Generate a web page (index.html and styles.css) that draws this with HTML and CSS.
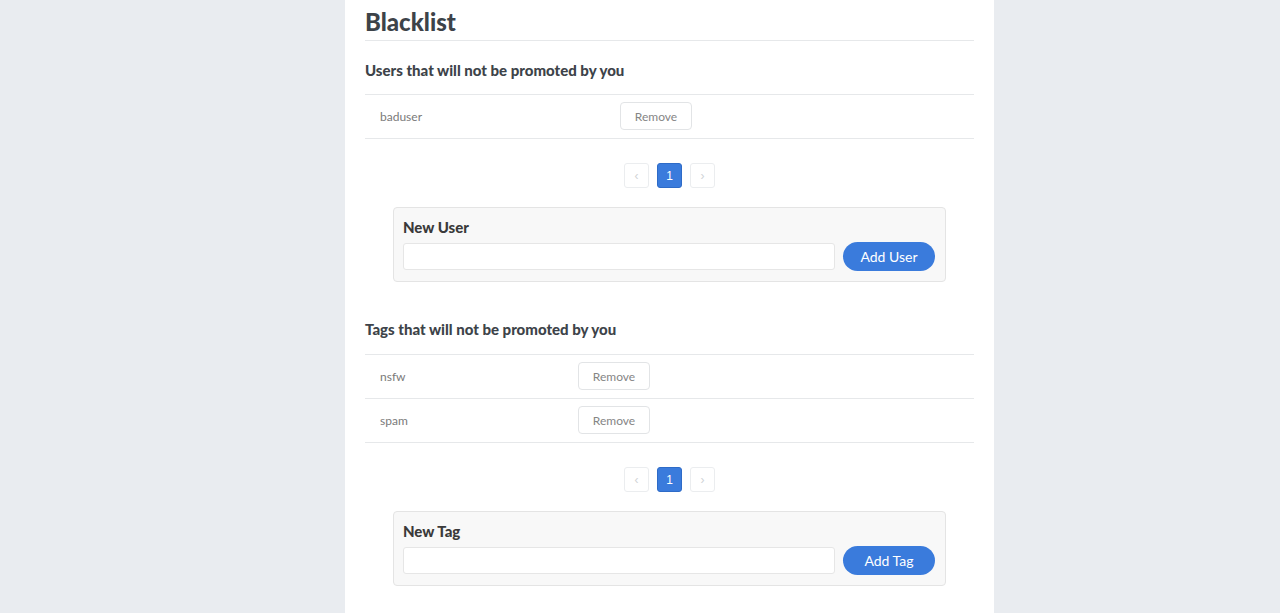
FILE: index.html
```html
<!DOCTYPE html>
<html>
<head>
<meta charset="utf-8">
<link rel="stylesheet" href="styles.css">
</head>
<body>
<div class="page">
  <main class="panel">
    <h1 class="title">Blacklist</h1>

    <h2 class="section-title first">Users that will not be promoted by you</h2>
    <table class="list list-users">
      <tr><td class="name">baduser</td><td class="action"><button class="btn-remove">Remove</button></td></tr>
    </table>
    <div class="pager">
      <span class="page-btn disabled">&#8249;</span>
      <span class="page-btn active">1</span>
      <span class="page-btn disabled">&#8250;</span>
    </div>
    <div class="add-box">
      <div class="add-label">New User</div>
      <div class="add-row">
        <input class="add-input" type="text">
        <button class="btn-add">Add User</button>
      </div>
    </div>

    <h2 class="section-title">Tags that will not be promoted by you</h2>
    <table class="list list-tags">
      <tr><td class="name">nsfw</td><td class="action"><button class="btn-remove">Remove</button></td></tr>
      <tr><td class="name">spam</td><td class="action"><button class="btn-remove">Remove</button></td></tr>
    </table>
    <div class="pager">
      <span class="page-btn disabled">&#8249;</span>
      <span class="page-btn active">1</span>
      <span class="page-btn disabled">&#8250;</span>
    </div>
    <div class="add-box">
      <div class="add-label">New Tag</div>
      <div class="add-row">
        <input class="add-input" type="text">
        <button class="btn-add">Add Tag</button>
      </div>
    </div>
  </main>
</div>
</body>
</html>
```

FILE: styles.css
```css
* { box-sizing: border-box; }
html, body {
  margin: 0;
  padding: 0;
  background: #e9ecf0;
  font-family: Lato, "Open Sans", "Liberation Sans", sans-serif;
  color: #3d4349;
}
.page {
  display: flex;
  justify-content: center;
  padding-left: 59px;
}
.panel {
  width: 649px;
  min-height: 613px;
  background: #fff;
  padding: 0 20px 20px;
}
.title {
  margin: 0;
  padding-top: 7px;
  padding-bottom: 3px;
  font-size: 24px;
  line-height: 30px;
  font-weight: 900;
  color: #3d4349;
  border-bottom: 1px solid #e6e8ea;
}
.section-title {
  margin: 37px 0 15px;
  font-size: 15px;
  line-height: 20px;
  font-weight: 900;
  color: #3d4349;
}
.section-title.first { margin-top: 19px; margin-bottom: 14px; }
.list {
  width: 100%;
  border-collapse: collapse;
}
.list td {
  border-top: 1px solid #e6e8ea;
  border-bottom: 1px solid #e6e8ea;
  height: 44px;
  padding: 0 15px 1px;
  vertical-align: middle;
  font-size: 12px;
  color: #7a7a7a;
}
.list td.action { padding-left: 0; }
.list-users td.name { width: 255px; }
.list-tags td.name { width: 213px; }
.btn-remove {
  width: 72px;
  height: 28px;
  background: #fff;
  border: 1px solid #e2e4e6;
  border-radius: 4px;
  font-family: inherit;
  font-size: 12px;
  color: #858585;
  padding: 0;
}
.pager {
  display: flex;
  justify-content: center;
  gap: 8px;
  margin-top: 24px;
}
.page-btn {
  width: 25px;
  height: 25px;
  border: 1px solid #ebedef;
  border-radius: 3px;
  display: flex;
  align-items: center;
  justify-content: center;
  font-size: 12px;
  color: #d0d3d6;
  font-family: "Liberation Sans", sans-serif;
}
.page-btn.active {
  background: #3a7bdc;
  border-color: #2e6bc7;
  color: #fff;
}
.add-box {
  margin: 19px 28px 0;
  background: #f8f8f8;
  border: 1px solid #e4e4e4;
  border-radius: 4px;
  padding: 9px 10px 10px 9px;
}
.add-label {
  font-size: 15px;
  line-height: 20px;
  font-weight: 900;
  color: #3a3a3a;
}
.add-row {
  display: flex;
  align-items: center;
  gap: 8px;
  margin-top: 5px;
}
.add-input {
  flex: 1;
  height: 27px;
  border: 1px solid #e6e6e6;
  border-radius: 3px;
  background: #fff;
  padding: 0 6px;
  font-family: inherit;
}
.btn-add {
  width: 92px;
  height: 29px;
  border: none;
  border-radius: 15px;
  background: #3a7bdc;
  color: #fff;
  font-family: inherit;
  font-size: 14px;
  padding: 0;
}
```
